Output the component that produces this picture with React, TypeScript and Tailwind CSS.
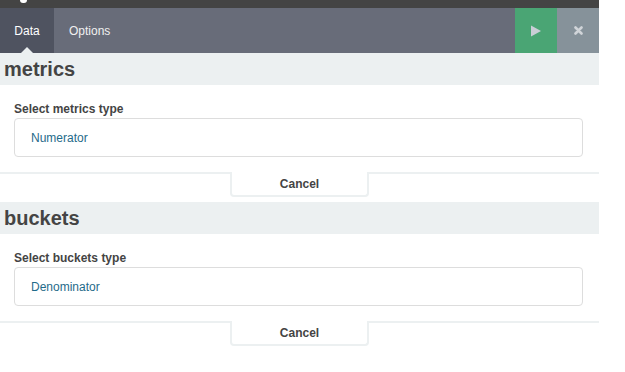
import React from 'react';

// Aggregation editor: tab bar + two agg sections (metrics / buckets)

const sections = [
  { title: 'metrics', label: 'Select metrics type', value: 'Numerator' },
  { title: 'buckets', label: 'Select buckets type', value: 'Denominator' },
];

function AggSection({ title, label, value }: { title: string; label: string; value: string }) {
  return (
    <div className="mb-[5px]">
      {/* section header */}
      <div className="h-[32px] bg-[#ecf0f1] flex items-center px-[4px]">
        <h2 className="text-[20px] font-bold text-[#444444] leading-none">{title}</h2>
      </div>

      {/* body */}
      <div className="pl-[14px] pr-[16px] pt-[16px] pb-[15px]">
        <label className="block text-[12px] font-bold text-[#444444] leading-[16px]">{label}</label>
        <div className="mt-[1px] h-[39px] border border-[#dddddd] rounded-[4px] flex items-center pl-[16px] text-[12px] text-[#1f6b8a]">
          {value}
        </div>
      </div>

      {/* footer with cancel tab */}
      <div className="border-t-2 border-[#ecf0f1] flex justify-center">
        <button className="-mt-[2px] w-[139px] h-[25px] pt-[1px] bg-white border-2 border-t-0 border-[#ecf0f1] rounded-b-[4px] text-[12px] font-bold text-[#444444]">
          Cancel
        </button>
      </div>
    </div>
  );
}

export default function App() {
  return (
    <div className="w-[625px] h-[372px] bg-white overflow-hidden" style={{ fontFamily: '"Liberation Sans", Arial, sans-serif' }}>
      <div className="w-[599px]">
        {/* top strip */}
        <div className="h-[8px] bg-[#444444] relative">
          <div className="absolute left-[20px] top-0 w-[7px] h-[3px] bg-white rounded-b-full" />
        </div>

        {/* tab bar */}
        <div className="h-[45px] bg-[#686c79] flex">
          <div className="relative w-[54px] bg-[#4f5360] flex items-center justify-center text-[12px] text-white">
            Data
            <span className="absolute bottom-0 left-[21px] w-0 h-0 border-l-[6px] border-r-[6px] border-b-[6px] border-l-transparent border-r-transparent border-b-[#ecf0f1]" />
          </div>
          <div className="pl-[15px] pr-[14px] flex items-center text-[12px] text-[#f0f0f0]">Options</div>
          <div className="flex-1" />
          <button className="w-[42px] bg-[#4aa574] flex items-center justify-center">
            <svg width="12" height="12" viewBox="0 0 12 12">
              <path d="M1 0.5 L11 6 L1 11.5 Z" fill="#c9ced6" />
            </svg>
          </button>
          <button className="w-[42px] bg-[#86929a] flex items-center justify-center">
            <svg width="9" height="9" viewBox="0 0 9 9">
              <path d="M1.5 1.5 L7.5 7.5 M7.5 1.5 L1.5 7.5" stroke="#d0d4d8" strokeWidth="2.6" strokeLinecap="round" />
            </svg>
          </button>
        </div>

        {sections.map((s) => (
          <AggSection key={s.title} {...s} />
        ))}
      </div>
    </div>
  );
}
